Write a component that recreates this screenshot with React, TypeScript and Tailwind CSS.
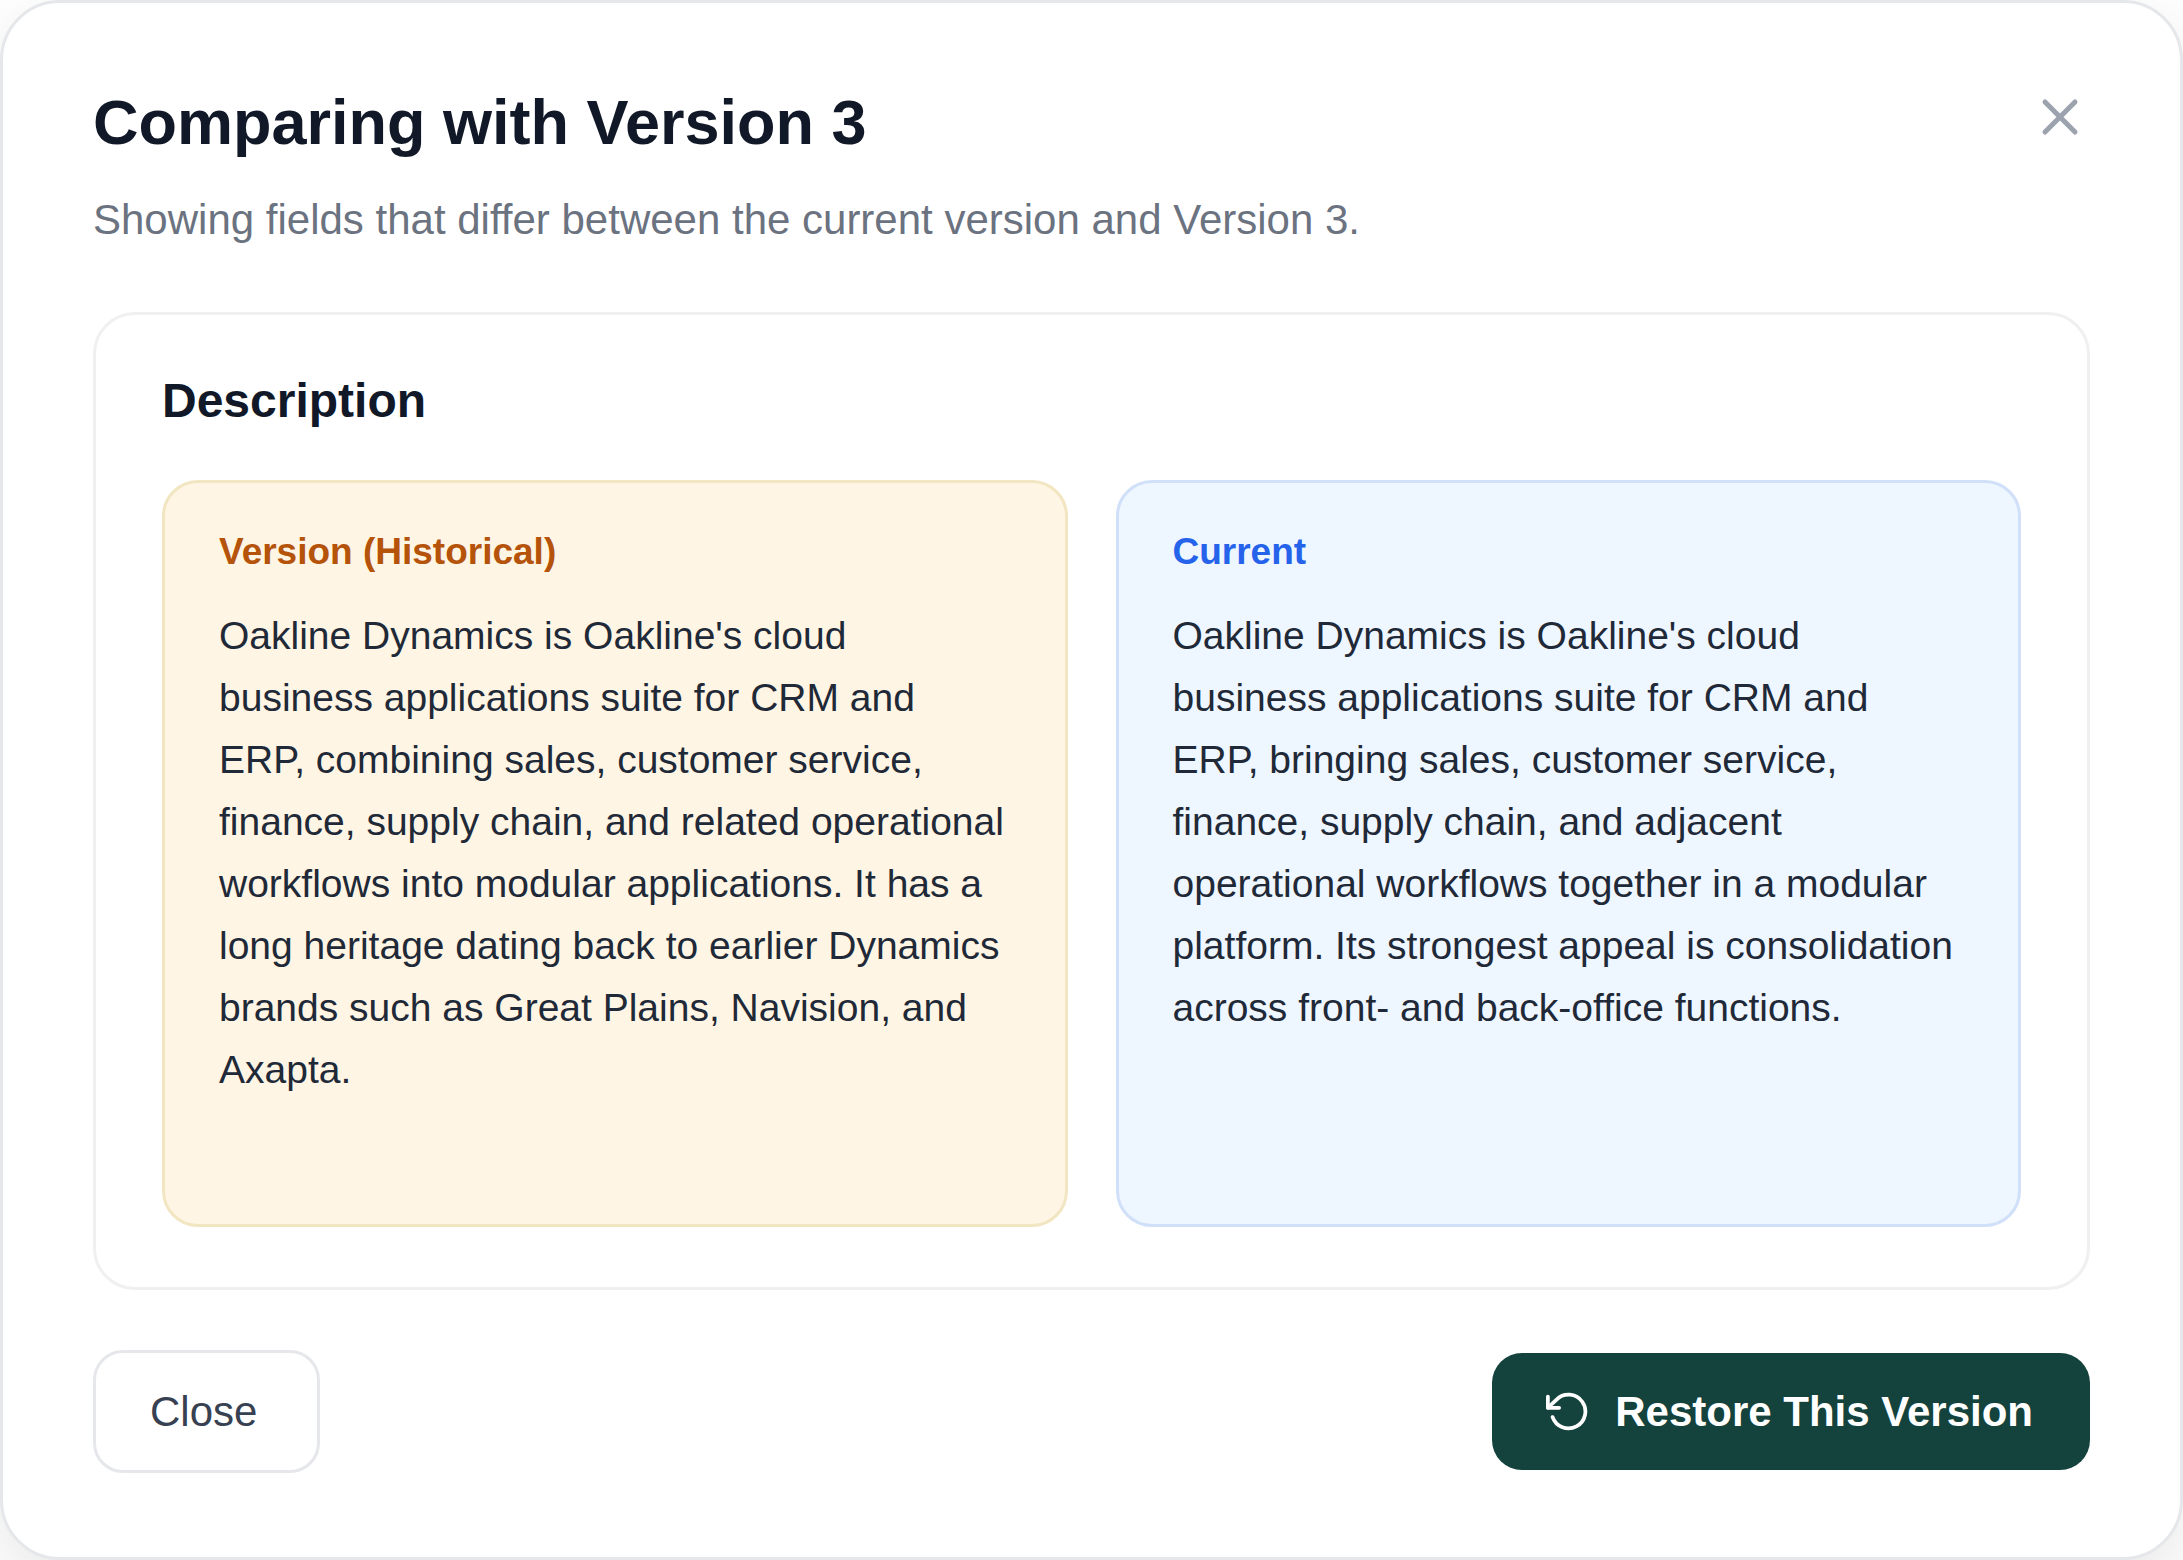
import { X } from 'lucide-react'
import { FiRotateCcw } from 'react-icons/fi'
import clsx from 'clsx'

type Side = 'historical' | 'current'

interface FieldDiff {
  label: string
  historical: string
  current: string
}

const VERSION = 3

const diffs: FieldDiff[] = [
  {
    label: 'Description',
    historical:
      "Oakline Dynamics is Oakline's cloud business applications suite for CRM and ERP, combining sales, customer service, finance, supply chain, and related operational workflows into modular applications. It has a long heritage dating back to earlier Dynamics brands such as Great Plains, Navision, and Axapta.",
    current:
      "Oakline Dynamics is Oakline's cloud business applications suite for CRM and ERP, bringing sales, customer service, finance, supply chain, and adjacent operational workflows together in a modular platform. Its strongest appeal is consolidation across front- and back-office functions.",
  },
]

function DiffPanel({ side, text }: { side: Side; text: string }) {
  const historical = side === 'historical'

  return (
    <div
      className={clsx(
        'min-h-[747px] rounded-[36px] border-[3px] px-[54px] py-12',
        historical ? 'border-[#f2e5c1] bg-[#fef5e4]' : 'border-[#d0e0f9] bg-[#eef6ff]'
      )}
    >
      <h4
        className={clsx(
          'text-[37px] leading-[42px] font-bold',
          historical ? 'text-[#b45309]' : 'text-[#2563eb]'
        )}
      >
        {historical ? 'Version (Historical)' : 'Current'}
      </h4>
      <p className="mt-8 text-[39px] leading-[62px] text-[#1f2937]">{text}</p>
    </div>
  )
}

export default function App() {
  return (
    <div className="min-h-screen overflow-hidden bg-white font-['Liberation_Sans',Arial,sans-serif]">
      <div
        role="dialog"
        aria-labelledby="compare-title"
        className="flex min-h-screen flex-col rounded-[60px] border-[3px] border-[#e5e7eb] bg-white px-[90px] pt-[81px] shadow-[0_24px_72px_rgba(0,0,0,0.1)]"
      >
        <header className="flex items-start justify-between">
          <div>
            <h2 id="compare-title" className="text-[63px] leading-[76px] font-bold text-[#111827]">
              Comparing with Version {VERSION}
            </h2>
            <p className="mt-[30px] text-[42px] leading-[60px] text-[#6b7280]">
              Showing fields that differ between the current version and Version {VERSION}.
            </p>
          </div>
          <button type="button" aria-label="Close dialog" className="py-[3px] text-[#9ca3af]">
            <X className="size-[60px]" />
          </button>
        </header>

        <main className="mt-[62px] flex flex-col gap-12">
          {diffs.map((diff) => (
            <section
              key={diff.label}
              className="rounded-[42px] border-[3px] border-[#f0f0f0] px-[66px] pt-14 pb-[60px]"
            >
              <h3 className="text-[48px] leading-[60px] font-bold text-[#111827]">{diff.label}</h3>
              <div className="mt-[49px] grid grid-cols-2 gap-12">
                <DiffPanel side="historical" text={diff.historical} />
                <DiffPanel side="current" text={diff.current} />
              </div>
            </section>
          ))}
        </main>

        <footer className="mt-[60px] flex items-center justify-between text-[42px]">
          <button
            type="button"
            className="h-[123px] rounded-[30px] border-[3px] border-[#e5e7eb] pr-[60px] pl-[54px] text-[#374151]"
          >
            Close
          </button>
          <button
            type="button"
            className="flex h-[117px] items-center gap-6 rounded-[30px] bg-[#14423d] pr-[57px] pl-[54px] font-bold text-white"
          >
            <FiRotateCcw className="size-[45px]" />
            Restore This Version
          </button>
        </footer>
      </div>
    </div>
  )
}
